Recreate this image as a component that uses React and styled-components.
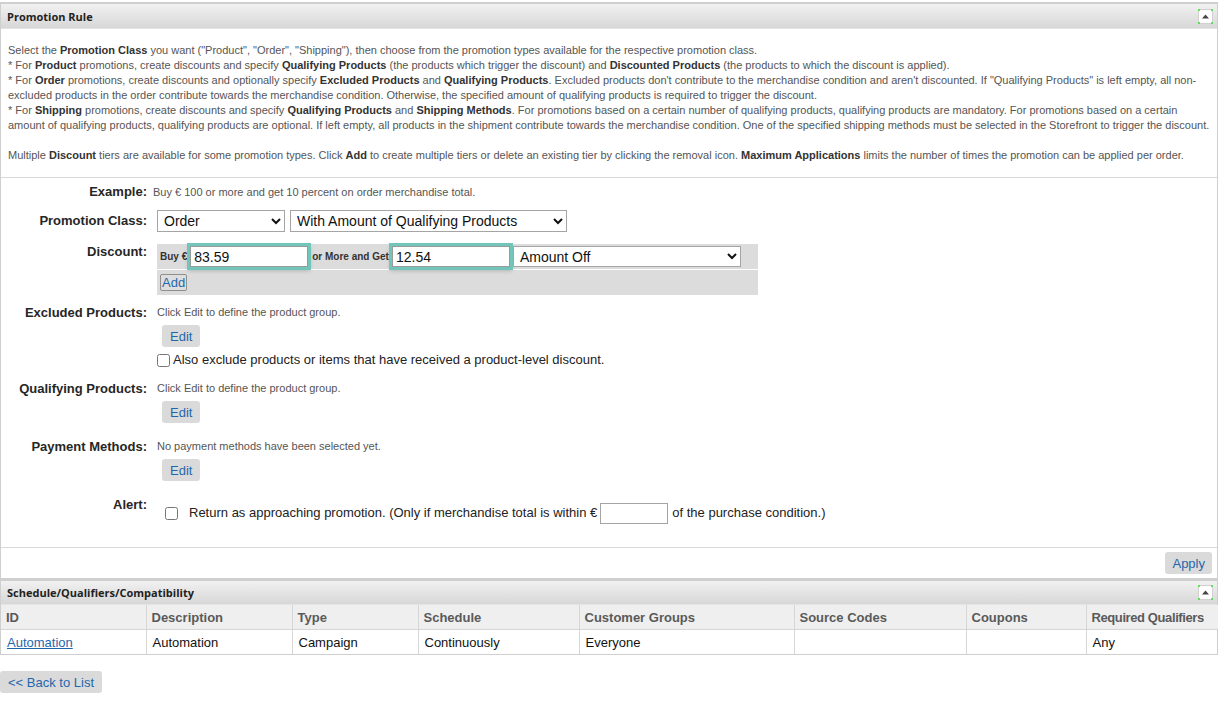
import React from 'react';
import styled, { createGlobalStyle } from 'styled-components';

const GlobalStyle = createGlobalStyle`
  body {
    margin: 0;
    background: #fff;
    font-family: "Liberation Sans", Arial, sans-serif;
    color: #222;
  }
`;

const Page = styled.div`
  width: 1218px;
  padding-top: 2px;
`;

const Panel = styled.section`
  border: 1px solid #cfcfcf;
  border-top-width: 2px;
  background: #fff;
`;

const PanelHeader = styled.header`
  display: flex;
  align-items: center;
  justify-content: space-between;
  height: ${(p) => p.$h || 24}px;
  padding: 0 4px 0 6px;
  background: linear-gradient(#f1f1f1, #d7d7d7);
  border-bottom: 1px solid #e4e4e4;
  font-family: "Open Sans", Lato, sans-serif;
  font-weight: 700;
  font-size: 11px;
  color: #222;
`;

const Intro = styled.div`
  padding: 14px 7px 14px 7px;
  border-bottom: 1px solid #d8d8d8;
  font-size: 11px;
  line-height: 15px;
  color: #555;
`;

const Line = styled.div`
  white-space: nowrap;
  min-height: 15px;
  b {
    font-weight: 700;
    color: #333;
  }
`;

const Form = styled.div`
  padding: 6px 0 23px;
  border-bottom: 1px solid #d8d8d8;
`;

const Row = styled.div`
  display: grid;
  grid-template-columns: 146px 1fr;
  column-gap: 6px;
  align-items: start;
  margin-top: ${(p) => p.$mt || 0}px;
`;

const Label = styled.div`
  text-align: right;
  font-size: 13px;
  font-weight: 700;
  line-height: ${(p) => p.$lh || 16}px;
  color: #262626;
`;

const Hint = styled.div`
  font-size: 11px;
  line-height: ${(p) => p.$lh || 14}px;
  color: #555;
  padding-left: ${(p) => p.$pl || 0}px;
`;

const Selects = styled.div`
  display: flex;
  gap: 5px;
  padding-left: 4px;
`;

const Select = styled.select`
  flex-shrink: 0;
  width: ${(p) => p.$w}px;
  height: ${(p) => p.$h || 22}px;
  border: 1px solid #a5a5a5;
  border-radius: 0;
  background: #fff;
  font-family: "Liberation Sans", Arial, sans-serif;
  font-size: 14px;
  color: #111;
  padding: 0 2px;
`;

const DiscountBox = styled.div`
  margin-left: 4px;
  width: 601px;
  background: #dcdcdc;
`;

const TierRow = styled.div`
  display: flex;
  align-items: center;
  height: 25px;
  padding-left: 3px;
  border-bottom: 1px solid #fff;
`;

const TierText = styled.span`
  font-size: 10px;
  font-weight: 700;
  color: #333;
  margin-right: 3px;
  white-space: nowrap;
`;

const TierInput = styled.input`
  flex-shrink: 0;
  box-sizing: border-box;
  width: 118px;
  height: 21px;
  border: 1px solid #9a9a9a;
  outline: 3px solid #72c6b9;
  outline-offset: 0;
  box-shadow: 0 2px 4px 2px rgba(0, 0, 0, 0.18);
  font-family: "Liberation Sans", Arial, sans-serif;
  font-size: 14px;
  padding: 0 3px;
  margin-right: ${(p) => p.$mr || 4}px;
  color: #111;
`;

const AddRow = styled.div`
  padding: 3px 3px 4px;
`;

const AddButton = styled.button`
  height: 17px;
  padding: 0 1px;
  border: 1px solid #8f8f8f;
  border-radius: 2px;
  background: #dedede;
  font-family: "Liberation Sans", Arial, sans-serif;
  font-size: 13px;
  color: #1f67ad;
  line-height: 15px;
`;

const GrayButton = styled.button`
  display: block;
  height: 22px;
  padding: 0 ${(p) => p.$px || 8}px;
  margin-left: ${(p) => p.$ml || 0}px;
  margin-top: ${(p) => p.$mt || 0}px;
  border: 0;
  border-radius: 3px;
  background: #dadada;
  font-family: "Liberation Sans", Arial, sans-serif;
  font-size: 13px;
  color: #1f67ad;
`;

const CheckLine = styled.label`
  display: flex;
  align-items: center;
  gap: ${(p) => p.$gap || 3}px;
  margin-top: ${(p) => p.$mt || 0}px;
  padding-left: ${(p) => p.$pl || 4}px;
  font-size: 13px;
  line-height: 16px;
  color: #222;
  white-space: nowrap;
  input[type='checkbox'] {
    margin: 0;
    width: 13px;
    height: 13px;
    flex-shrink: 0;
  }
`;

const SmallInput = styled.input`
  box-sizing: border-box;
  width: 68px;
  height: 21px;
  border: 1px solid #a5a5a5;
  margin: 0 4px 0 3px;
  vertical-align: middle;
`;

const Footer = styled.div`
  display: flex;
  justify-content: flex-end;
  padding: 4px 5px 4px;
`;

const Table = styled.table`
  width: 100%;
  border-collapse: collapse;
  table-layout: fixed;
  font-size: 13px;
`;

const Th = styled.th`
  height: 24px;
  padding: 0 5px;
  background: #efefef;
  border-right: 1px solid #d6d6d6;
  border-bottom: 1px solid #d6d6d6;
  text-align: left;
  font-weight: 700;
  color: #5a5a5a;
  white-space: nowrap;
  overflow: hidden;
  &:last-child {
    border-right: 0;
    letter-spacing: -0.4px;
  }
`;

const Td = styled.td`
  height: 24px;
  padding: 0 6px;
  border-right: 1px solid #d6d6d6;
  color: #111;
  &:last-child {
    border-right: 0;
  }
  a {
    color: #1f67ad;
  }
`;

const BackRow = styled.div`
  padding: 16px 0 0 0;
`;

function CollapseIcon() {
  return (
    <svg width="15" height="15" viewBox="0 0 15 15">
      <rect x="0.5" y="0.5" width="14" height="14" fill="#fff" stroke="#d0d0d0" />
      <path d="M4 9.5 L7.5 5.5 L11 9.5 Z" fill="#444" />
      <rect x="0" y="0" width="2" height="2" fill="#5ee05e" />
      <rect x="13" y="0" width="2" height="2" fill="#5ee05e" />
      <rect x="0" y="13" width="2" height="2" fill="#5ee05e" />
      <rect x="13" y="13" width="2" height="2" fill="#5ee05e" />
    </svg>
  );
}

const columns = [
  ['ID', 145],
  ['Description', 146],
  ['Type', 126],
  ['Schedule', 161],
  ['Customer Groups', 215],
  ['Source Codes', 172],
  ['Coupons', 120],
  ['Required Qualifiers', 132],
];

export default function App() {
  return (
    <Page>
      <GlobalStyle />
      <Panel>
        <PanelHeader>
          <span>Promotion Rule</span>
          <CollapseIcon />
        </PanelHeader>
        <Intro>
          <Line>
            Select the <b>Promotion Class</b> you want ("Product", "Order", "Shipping"), then choose from the promotion types available for the respective promotion class.
          </Line>
          <Line>
            * For <b>Product</b> promotions, create discounts and specify <b>Qualifying Products</b> (the products which trigger the discount) and <b>Discounted Products</b> (the products to which the discount is applied).
          </Line>
          <Line>
            * For <b>Order</b> promotions, create discounts and optionally specify <b>Excluded Products</b> and <b>Qualifying Products</b>. Excluded products don't contribute to the merchandise condition and aren't discounted. If "Qualifying Products" is left empty, all non-
          </Line>
          <Line>
            excluded products in the order contribute towards the merchandise condition. Otherwise, the specified amount of qualifying products is required to trigger the discount.
          </Line>
          <Line>
            * For <b>Shipping</b> promotions, create discounts and specify <b>Qualifying Products</b> and <b>Shipping Methods</b>. For promotions based on a certain number of qualifying products, qualifying products are mandatory. For promotions based on a certain
          </Line>
          <Line>
            amount of qualifying products, qualifying products are optional. If left empty, all products in the shipment contribute towards the merchandise condition. One of the specified shipping methods must be selected in the Storefront to trigger the discount.
          </Line>
          <Line />
          <Line>
            Multiple <b>Discount</b> tiers are available for some promotion types. Click <b>Add</b> to create multiple tiers or delete an existing tier by clicking the removal icon. <b>Maximum Applications</b> limits the number of times the promotion can be applied per order.
          </Line>
        </Intro>

        <Form>
          <Row>
            <Label>Example:</Label>
            <Hint $lh={16}>Buy € 100 or more and get 10 percent on order merchandise total.</Hint>
          </Row>

          <Row $mt={10}>
            <Label $lh={22}>Promotion Class:</Label>
            <Selects>
              <Select $w={128} defaultValue="Order">
                <option>Product</option>
                <option>Order</option>
                <option>Shipping</option>
              </Select>
              <Select $w={277} defaultValue="With Amount of Qualifying Products">
                <option>With Amount of Qualifying Products</option>
                <option>With Number of Qualifying Products</option>
              </Select>
            </Selects>
          </Row>

          <Row $mt={12}>
            <Label>Discount:</Label>
            <DiscountBox>
              <TierRow>
                <TierText>Buy €</TierText>
                <TierInput defaultValue="83.59" />
                <TierText>or More and Get</TierText>
                <TierInput defaultValue="12.54" $mr={3} />
                <Select $w={228} $h={21} defaultValue="Amount Off">
                  <option>Amount Off</option>
                  <option>Percent Off</option>
                </Select>
              </TierRow>
              <AddRow>
                <AddButton>Add</AddButton>
              </AddRow>
            </DiscountBox>
          </Row>

          <Row $mt={10}>
            <Label>Excluded Products:</Label>
            <div>
              <Hint $pl={4}>Click Edit to define the product group.</Hint>
              <GrayButton $ml={9} $mt={6}>Edit</GrayButton>
              <CheckLine $mt={5}>
                <input type="checkbox" />
                Also exclude products or items that have received a product-level discount.
              </CheckLine>
            </div>
          </Row>

          <Row $mt={13}>
            <Label>Qualifying Products:</Label>
            <div>
              <Hint $pl={4}>Click Edit to define the product group.</Hint>
              <GrayButton $ml={9} $mt={6}>Edit</GrayButton>
            </div>
          </Row>

          <Row $mt={16}>
            <Label>Payment Methods:</Label>
            <div>
              <Hint $pl={4}>No payment methods have been selected yet.</Hint>
              <GrayButton $ml={9} $mt={6}>Edit</GrayButton>
            </div>
          </Row>

          <Row $mt={16}>
            <Label>Alert:</Label>
            <CheckLine $mt={6} $pl={12} $gap={11}>
              <input type="checkbox" />
              <span>
                Return as approaching promotion. (Only if merchandise total is within €
                <SmallInput />
                of the purchase condition.)
              </span>
            </CheckLine>
          </Row>
        </Form>

        <Footer>
          <GrayButton $px={7}>Apply</GrayButton>
        </Footer>
      </Panel>

      <Panel>
        <PanelHeader $h={23}>
          <span>Schedule/Qualifiers/Compatibility</span>
          <CollapseIcon />
        </PanelHeader>
        <Table>
          <colgroup>
            {columns.map(([name, w]) => (
              <col key={name} style={{ width: w }} />
            ))}
          </colgroup>
          <thead>
            <tr>
              {columns.map(([name]) => (
                <Th key={name}>{name}</Th>
              ))}
            </tr>
          </thead>
          <tbody>
            <tr>
              <Td>
                <a href="#automation">Automation</a>
              </Td>
              <Td>Automation</Td>
              <Td>Campaign</Td>
              <Td>Continuously</Td>
              <Td>Everyone</Td>
              <Td />
              <Td />
              <Td>Any</Td>
            </tr>
          </tbody>
        </Table>
      </Panel>

      <BackRow>
        <GrayButton $px={8}>&lt;&lt; Back to List</GrayButton>
      </BackRow>
    </Page>
  );
}
